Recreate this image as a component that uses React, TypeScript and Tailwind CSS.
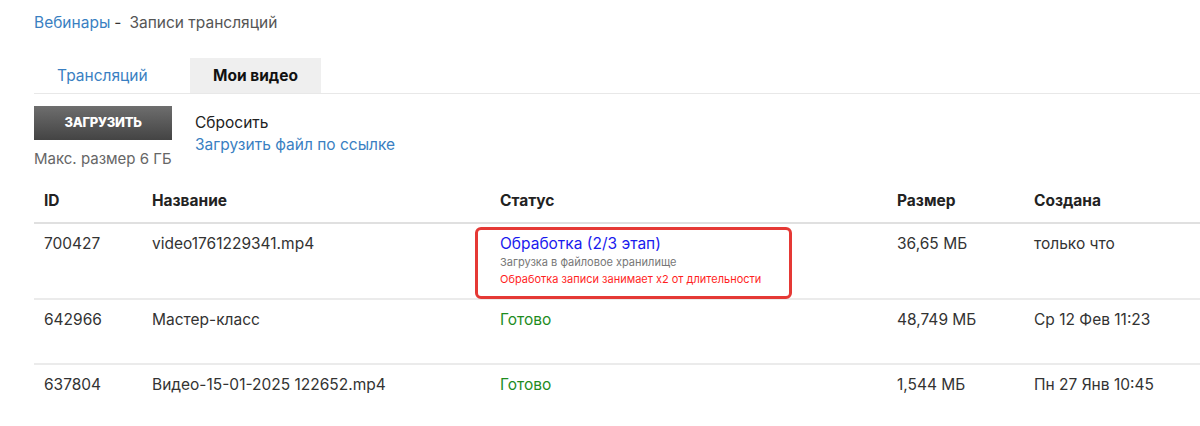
const rows = [
  {
    id: "700427",
    name: "video1761229341.mp4",
    size: "36,65 МБ",
    created: "только что",
    processing: true,
  },
  {
    id: "642966",
    name: "Мастер-класс",
    size: "48,749 МБ",
    created: "Ср 12 Фев 11:23",
    processing: false,
  },
  {
    id: "637804",
    name: "Видео-15-01-2025 122652.mp4",
    size: "1,544 МБ",
    created: "Пн 27 Янв 10:45",
    processing: false,
  },
];

const cols = "grid grid-cols-[108px_348px_397px_137px_1fr]";

export default function App() {
  return (
    <div className="min-h-[426px] bg-white pl-[34px] pt-[11px] text-[#333] font-['Inter','Noto_Sans',sans-serif]">
      <div className="flex h-[24px] items-center text-[15.5px]">
        <a className="text-[#3a7fc2]">Вебинары</a>
        <span className="ml-[4px] text-[#333]">-</span>
        <span className="ml-[8px] text-[#555]">Записи трансляций</span>
      </div>

      <div className="mt-[23px] flex border-b border-[#e8e8e8]">
        <div className="flex h-[35px] w-[156px] items-center pl-[23px] text-[15.5px] text-[#3a7fc2]">
          Трансляций
        </div>
        <div className="flex h-[35px] w-[131px] items-center justify-center bg-[#efefef] text-[15.5px] font-bold text-[#111]">
          Мои видео
        </div>
      </div>

      <div className="mt-[12px] flex">
        <div className="flex w-[138px] flex-col">
          <button className="flex h-[34px] w-[138px] items-center justify-center bg-gradient-to-b from-[#6e6e6e] to-[#444] text-[13px] font-extrabold tracking-tight text-white">
            ЗАГРУЗИТЬ
          </button>
          <span className="mt-[8px] whitespace-nowrap text-[15px] text-[#666]">Макс. размер 6 ГБ</span>
        </div>
        <div className="ml-[23px] flex flex-col pt-[5px] text-[15.5px]">
          <span className="leading-[24px] text-[#222]">Сбросить</span>
          <a className="-mt-[2px] leading-[24px] text-[#3a7fc2]">Загрузить файл по ссылке</a>
        </div>
      </div>

      <div className="mt-[11px]">
        <div className={`${cols} h-[42px] items-center border-b-2 border-[#e0e0e0] pb-[2px] text-[15.5px] font-bold text-[#222]`}>
          <div className="pl-[10px]">ID</div>
          <div className="pl-[10px]">Название</div>
          <div className="pl-[10px]">Статус</div>
          <div className="pl-[10px]">Размер</div>
          <div className="pl-[10px]">Создана</div>
        </div>

        {rows.map((row, i) => (
          <div
            key={row.id}
            className={`${cols} text-[15.5px] ${i === 0 ? "h-[76px]" : "h-[65px]"} ${i < rows.length - 1 ? "border-b-2 border-[#ebebeb]" : ""}`}
          >
            <div className="pl-[10px] pt-[8px] leading-[24px]">{row.id}</div>
            <div className="pl-[10px] pt-[8px] leading-[24px]">{row.name}</div>
            <div className="pl-[10px]">
              {row.processing ? (
                <div className="-ml-[25px] mt-[3px] h-[72px] w-[317px] rounded-[6px] border-[3px] border-[#e53935] pl-[22px] pt-[2px]">
                  <div className="-mb-[2px] leading-[24px] text-[#1a1aee]">Обработка (2/3 этап)</div>
                  <div className="text-[11px] leading-[17px] text-[#777]">Загрузка в файловое хранилище</div>
                  <div className="text-[11px] leading-[17px] text-[#ff1f1f]">
                    Обработка записи занимает x2 от длительности
                  </div>
                </div>
              ) : (
                <div className="pt-[8px] leading-[24px] text-[#1e8c1e]">Готово</div>
              )}
            </div>
            <div className="pl-[10px] pt-[8px] leading-[24px]">{row.size}</div>
            <div className="pl-[10px] pt-[8px] leading-[24px]">{row.created}</div>
          </div>
        ))}
      </div>
    </div>
  );
}
